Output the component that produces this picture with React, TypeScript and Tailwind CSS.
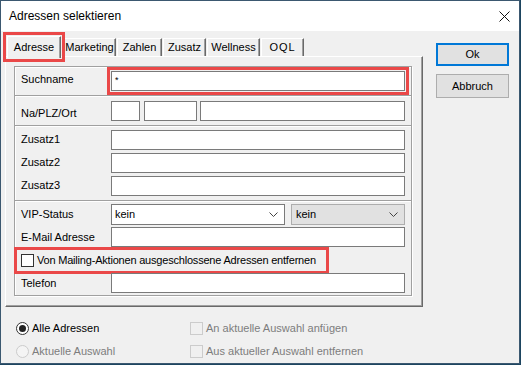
const Chevron = () => (
  <svg width="9" height="5" viewBox="0 0 9 5" className="shrink-0">
    <polyline points="0.5,0.5 4.5,4.5 8.5,0.5" fill="none" stroke="#444" strokeWidth="1" />
  </svg>
);

const Input = ({ className = "", children }: { className?: string; children?: React.ReactNode }) => (
  <div className={"h-[20px] bg-white border border-[#7a7a7a] flex items-center pl-[3px] " + className}>
    {children}
  </div>
);

const Separator = () => (
  <div className="h-[2px] border-t border-[#a0a0a0] border-b border-b-white" />
);

const Row = ({ label, children, className = "" }: { label: string; children: React.ReactNode; className?: string }) => (
  <div className={"flex items-center pl-[6px] pr-[6px] " + className}>
    <span className="w-[90px] shrink-0 whitespace-nowrap">{label}</span>
    <div className="flex flex-1 items-center">{children}</div>
  </div>
);

export default function App() {
  const tabs = [
    { name: "Marketing", cls: "ml-[2px] w-[53px]" },
    { name: "Zahlen", cls: "ml-[1px] w-[45px]" },
    { name: "Zusatz", cls: "ml-[1px] w-[43px]" },
    { name: "Wellness", cls: "ml-[1px] w-[53px]" },
    { name: "OQL", cls: "ml-[1px] w-[43px] tracking-[1px]" },
  ];

  return (
    <div className="w-[521px] h-[365px] bg-[#1d4560] font-['Liberation_Sans',Arial,sans-serif] text-[11px] text-black">
      <div className="w-[520px] h-[364px] border border-[#3b5870] bg-[#f0f0f0] flex flex-col">
        {/* Title bar */}
        <div className="h-[30px] bg-white flex items-center justify-between pl-[8px] pr-[9px] shrink-0">
          <span className="text-[12px]">Adressen selektieren</span>
          <svg width="11" height="11" viewBox="0 0 11 11">
            <path d="M0.5 0.5 L10.5 10.5 M10.5 0.5 L0.5 10.5" stroke="#111" strokeWidth="1" />
          </svg>
        </div>

        <div className="flex flex-1">
          {/* Left column */}
          <div className="pl-[4px] pt-[5px] flex flex-col">
            {/* Tabs */}
            <div className="flex items-end h-[20px]">
              <div className="ml-[2px] w-[54px] h-[22px] -mb-[2px] relative z-10 bg-[#f0f0f0] border-l border-t border-white border-r border-r-[#696969] shadow-[inset_-1px_0_0_#a0a0a0] flex items-center justify-center outline-[3px] outline-solid outline-[#ea4848] outline-offset-[1px]">
                Adresse
              </div>
              {tabs.map((t) => (
                <div
                  key={t.name}
                  className={
                    "h-[18px] bg-[#f0f0f0] border-l border-t border-white border-r border-r-[#696969] shadow-[inset_-1px_0_0_#a0a0a0] flex items-center justify-center " +
                    t.cls
                  }
                >
                  {t.name}
                </div>
              ))}
            </div>

            {/* Panel */}
            <div className="w-[418px] h-[251px] border border-t-white border-l-white border-r-[#696969] border-b-[#696969] shadow-[inset_-1px_-1px_0_#a0a0a0]">
              <div className="ml-[8px] mt-[9px] w-[398px] h-[230px] border border-[#a0a0a0] shadow-[1px_1px_0_#fff,inset_1px_1px_0_#fff] flex flex-col">
                {/* Suchname */}
                <Row label="Suchname" className="h-[28px] items-start pt-[4px]">
                  <Input className="flex-1 outline-[3px] outline-solid outline-[#ea4848] outline-offset-[1px] items-start pt-[2px] text-[9px]">
                    *
                  </Input>
                </Row>
                <Separator />
                {/* Na/PLZ/Ort */}
                <div className="h-[28px] flex items-start pt-[4px] pl-[6px] pr-[6px]">
                  <span className="w-[90px] shrink-0 mt-[4px]">Na/PLZ/Ort</span>
                  <Input className="w-[29px]" />
                  <Input className="w-[53px] ml-[4px]" />
                  <Input className="flex-1 ml-[3px]" />
                </div>
                <Separator />
                {/* Zusatz */}
                <div className="h-[73px] flex flex-col pt-[2px] gap-[2px]">
                  <Row label="Zusatz1" className="h-[21px]">
                    <Input className="flex-1" />
                  </Row>
                  <Row label="Zusatz2" className="h-[21px]">
                    <Input className="flex-1" />
                  </Row>
                  <Row label="Zusatz3" className="h-[21px]">
                    <Input className="flex-1" />
                  </Row>
                </div>
                <Separator />
                {/* VIP etc */}
                <div className="flex flex-col pt-[2px]">
                  <Row label="VIP-Status" className="h-[21px]">
                    <div className="w-[174px] h-[21px] bg-white border border-[#7a7a7a] flex items-center justify-between pl-[3px] pr-[6px]">
                      <span>kein</span>
                      <Chevron />
                    </div>
                    <div className="ml-[6px] flex-1 h-[21px] bg-[#e1e1e1] border border-[#adadad] flex items-center justify-between pl-[4px] pr-[6px]">
                      <span>kein</span>
                      <Chevron />
                    </div>
                  </Row>
                  <Row label="E-Mail Adresse" className="h-[20px] mt-[2px]">
                    <Input className="flex-1" />
                  </Row>
                  <div className="ml-[3px] mt-[4px] w-[307px] h-[19px] flex items-center pl-[3px] outline-[3px] outline-solid outline-[#ea4848] outline-offset-[1px]">
                    <div className="w-[13px] h-[13px] shrink-0 bg-white border border-[#333]" />
                    <span className="ml-[3px] whitespace-nowrap tracking-[-0.2px]">
                      Von Mailing-Aktionen ausgeschlossene Adressen entfernen
                    </span>
                  </div>
                  <Row label="Telefon" className="h-[20px] mt-[3px]">
                    <Input className="flex-1" />
                  </Row>
                </div>
              </div>
            </div>

            {/* Bottom options */}
            <div className="grid grid-cols-[174px_1fr] gap-y-[9px] pl-[11px] pt-[14px]">
              <div className="flex items-center h-[14px]">
                <div className="w-[13px] h-[13px] rounded-full border border-[#333] bg-white flex items-center justify-center">
                  <div className="w-[7px] h-[7px] rounded-full bg-[#222]" />
                </div>
                <span className="ml-[3px]">Alle Adressen</span>
              </div>
              <div className="flex items-center h-[14px] text-[#7d7d7d]">
                <div className="w-[13px] h-[13px] border border-[#cccccc]" />
                <span className="ml-[3px]">An aktuelle Auswahl anfügen</span>
              </div>
              <div className="flex items-center h-[14px] text-[#7d7d7d]">
                <div className="w-[13px] h-[13px] rounded-full border border-[#cccccc] bg-[#f4f4f4]" />
                <span className="ml-[3px]">Aktuelle Auswahl</span>
              </div>
              <div className="flex items-center h-[14px] text-[#7d7d7d]">
                <div className="w-[13px] h-[13px] border border-[#cccccc]" />
                <span className="ml-[3px]">Aus aktueller Auswahl entfernen</span>
              </div>
            </div>
          </div>

          {/* Right buttons */}
          <div className="ml-[13px] pt-[12px] flex flex-col gap-[8px]">
            <button className="w-[73px] h-[23px] bg-[#e1e1e1] border-2 border-[#0078d7] flex items-center justify-center">
              Ok
            </button>
            <button className="w-[73px] h-[24px] bg-[#e1e1e1] border border-[#adadad] flex items-center justify-center">
              Abbruch
            </button>
          </div>
        </div>
      </div>
    </div>
  );
}
